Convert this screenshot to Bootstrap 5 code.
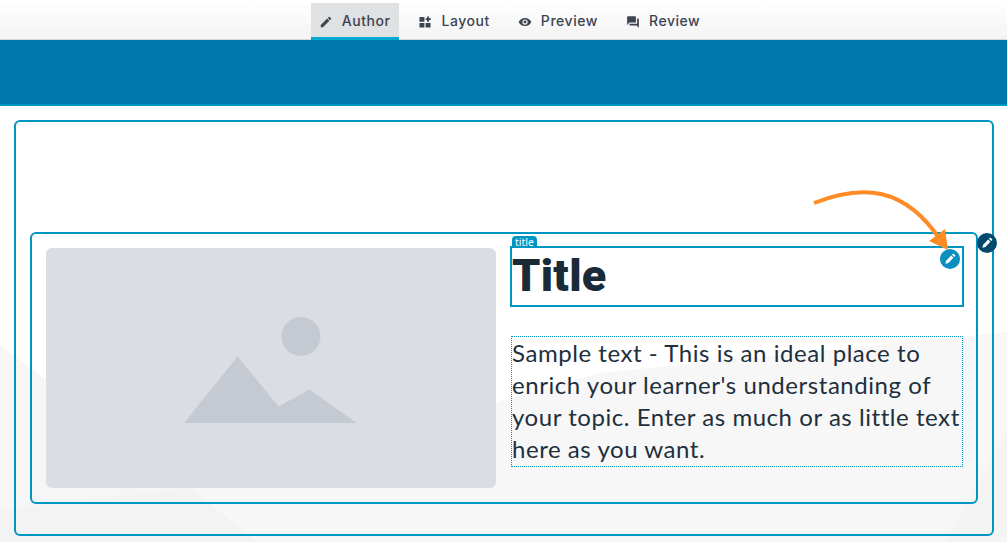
<!DOCTYPE html>
<html lang="en">
<head>
<meta charset="utf-8">
<title>Author</title>
<link rel="stylesheet" href="https://cdn.jsdelivr.net/npm/bootstrap@5.3.0/dist/css/bootstrap.min.css">
<style>
html,body{height:542px;overflow:hidden;background:#fff}
body{position:relative}
.bg-shapes{position:absolute;left:0;top:0;z-index:0}
.page-content{position:relative;z-index:1}
.top-tabs{height:40px;padding-left:13px;background:linear-gradient(#fff,#f3f3f3);box-shadow:inset 0 -1px 0 #d5d7d9;gap:11px}
.top-tab{height:37px;margin-top:3px;padding:0 9px 0 8px;gap:9px;color:#3d4452;font:500 14px/36px Inter,sans-serif;letter-spacing:.55px;text-decoration:none}
.top-tab svg{width:14px;height:14px;fill:#3d4452}
.top-tab.on{background:#e0e1e2;box-shadow:inset 0 -3px 0 #00a9ce}
.hero-band{height:66px;background:#0076ad;border-bottom:2px solid #0096c4}
.outer-box{margin:14px 13px 0 14px;height:416px;border:2px solid #0096c4;border-radius:6px;padding:110px 14px 30px}
.inner-box{height:272px;border:2px solid #0096c4;border-radius:6px;padding:14px;gap:14px;position:relative}
.image-ph{width:450px;height:240px;background:#dadde2;border-radius:6px}
.image-ph svg{width:175px;height:106px}
.right-col{width:454px;margin-top:-2px}
.title-box{position:relative;height:61px;border:2px solid #0096c4;margin-bottom:29px}
.title-tag{position:absolute;left:0;top:-12px;height:11px;padding:0 3px;background:#0096c4;color:#fff;font:400 10.5px/12px "Noto Sans",sans-serif;border-radius:4px 4px 0 0}
.title-text{margin:0;color:#1a2b38;font:900 45px/55px Roboto,sans-serif;letter-spacing:.3px}
.body-box{margin:0 1px;height:131px;border:1px dotted #0096c4;padding:0;color:#1e2f3d;font:400 24px/32px Lato,sans-serif;letter-spacing:.55px;white-space:nowrap}
.edit-dot{position:absolute;width:20px;height:20px;border-radius:50%;display:flex;align-items:center;justify-content:center}
.edit-dot svg{width:14px;height:14px;fill:#fff}
.dot-a{background:#0b8fc0;right:2px;top:1px}
.dot-b{background:#00496e;right:-21px;top:-1px}
.arrow-layer{position:absolute;left:0;top:0;z-index:2;pointer-events:none}
</style>
</head>
<body>
<svg class="bg-shapes" width="1007" height="542" viewBox="0 0 1007 542">
<polygon points="0,345 258,542 0,542" fill="#f6f6f6"/>
<polygon points="0,510 190,488 600,373 1007,332 1007,542 0,542" fill="#f7f7f7"/>
<polygon points="1007,430 945,542 1007,542" fill="#f4f4f4"/>
<polygon points="0,510 190,488 258,542 0,542" fill="#f3f3f3"/>
</svg>
<div class="page-content">
<nav class="top-tabs d-flex justify-content-center">
<a class="top-tab on d-flex" href="#"><svg viewBox="0 0 24 24" class="align-self-center"><path d="M3 17.25V21h3.75L17.81 9.94l-3.75-3.75L3 17.25zM20.71 7.04a1 1 0 0 0 0-1.41l-2.34-2.34a1 1 0 0 0-1.41 0l-1.83 1.83 3.75 3.75 1.83-1.83z"/></svg>Author</a>
<a class="top-tab d-flex" href="#"><svg viewBox="0 0 24 24" class="align-self-center"><path d="M2.5 3.5h8.5v8H2.5zM2.5 13.5h8.5v8H2.5zM13 13.5h8.5v8H13zM15.5 2.5h3.5v3H22v3h-3v3h-3.500V8.500H13v-3h2.500z"/></svg>Layout</a>
<a class="top-tab d-flex" href="#"><svg viewBox="0 0 24 24" class="align-self-center"><path d="M12 5C7 5 2.73 8.11 1 12c1.73 3.89 6 7 11 7s9.27-3.11 11-7c-1.73-3.89-6-7-11-7zm0 11.5a4.5 4.5 0 1 1 0-9 4.5 4.5 0 0 1 0 9zm0-7a2.5 2.5 0 1 0 0 5 2.5 2.5 0 0 0 0-5z"/></svg>Preview</a>
<a class="top-tab d-flex" href="#"><svg viewBox="0 0 24 24" class="align-self-center"><path d="M21 6h-2v9H6v2c0 .55.45 1 1 1h11l4 4V7c0-.55-.45-1-1-1zm-4 6V3c0-.55-.45-1-1-1H3c-.55 0-1 .45-1 1v14l4-4h10c.55 0 1-.45 1-1z"/></svg>Review</a>
</nav>
<div class="hero-band"></div>
<div class="outer-box">
<div class="inner-box d-flex">
<div class="image-ph d-flex align-items-center justify-content-center flex-shrink-0">
<svg viewBox="0 0 175 106" class="mt-1"><circle cx="117" cy="19.5" r="19.5" fill="#c5cad2"/><polygon points="0,106 53.5,39.5 94.5,89.5 125.5,72.5 172.5,106" fill="#c5cad2"/></svg>
</div>
<div class="right-col flex-shrink-0">
<div class="title-box">
<span class="title-tag">title</span>
<h1 class="title-text">Title</h1>
<span class="edit-dot dot-a"><svg viewBox="0 0 24 24"><path d="M4 20l1.300-5.200L14 6.100l3.900 3.900-8.700 8.700zM15.400 4.700l1.200-1.200a1.500 1.500 0 0 1 2.100 0l1.800 1.800a1.500 1.500 0 0 1 0 2.100l-1.200 1.200z"/></svg></span>
</div>
<p class="body-box">Sample text - This is an ideal place to<br>enrich your learner's understanding of<br>your topic. Enter as much or as little text<br>here as you want.</p>
</div>
<span class="edit-dot dot-b"><svg viewBox="0 0 24 24"><path d="M4 20l1.300-5.200L14 6.100l3.900 3.900-8.700 8.700zM15.400 4.700l1.200-1.200a1.500 1.500 0 0 1 2.100 0l1.800 1.800a1.500 1.500 0 0 1 0 2.100l-1.200 1.200z"/></svg></span>
</div>
</div>
</div>
<svg class="arrow-layer" width="1007" height="542" viewBox="0 0 1007 542">
<path d="M814 203C862 184 905 186 941 241" fill="none" stroke="#ff8b26" stroke-width="4"/>
<polygon points="948,250 929,241 945,229" fill="#ff8b26"/>
</svg>
</body>
</html>
